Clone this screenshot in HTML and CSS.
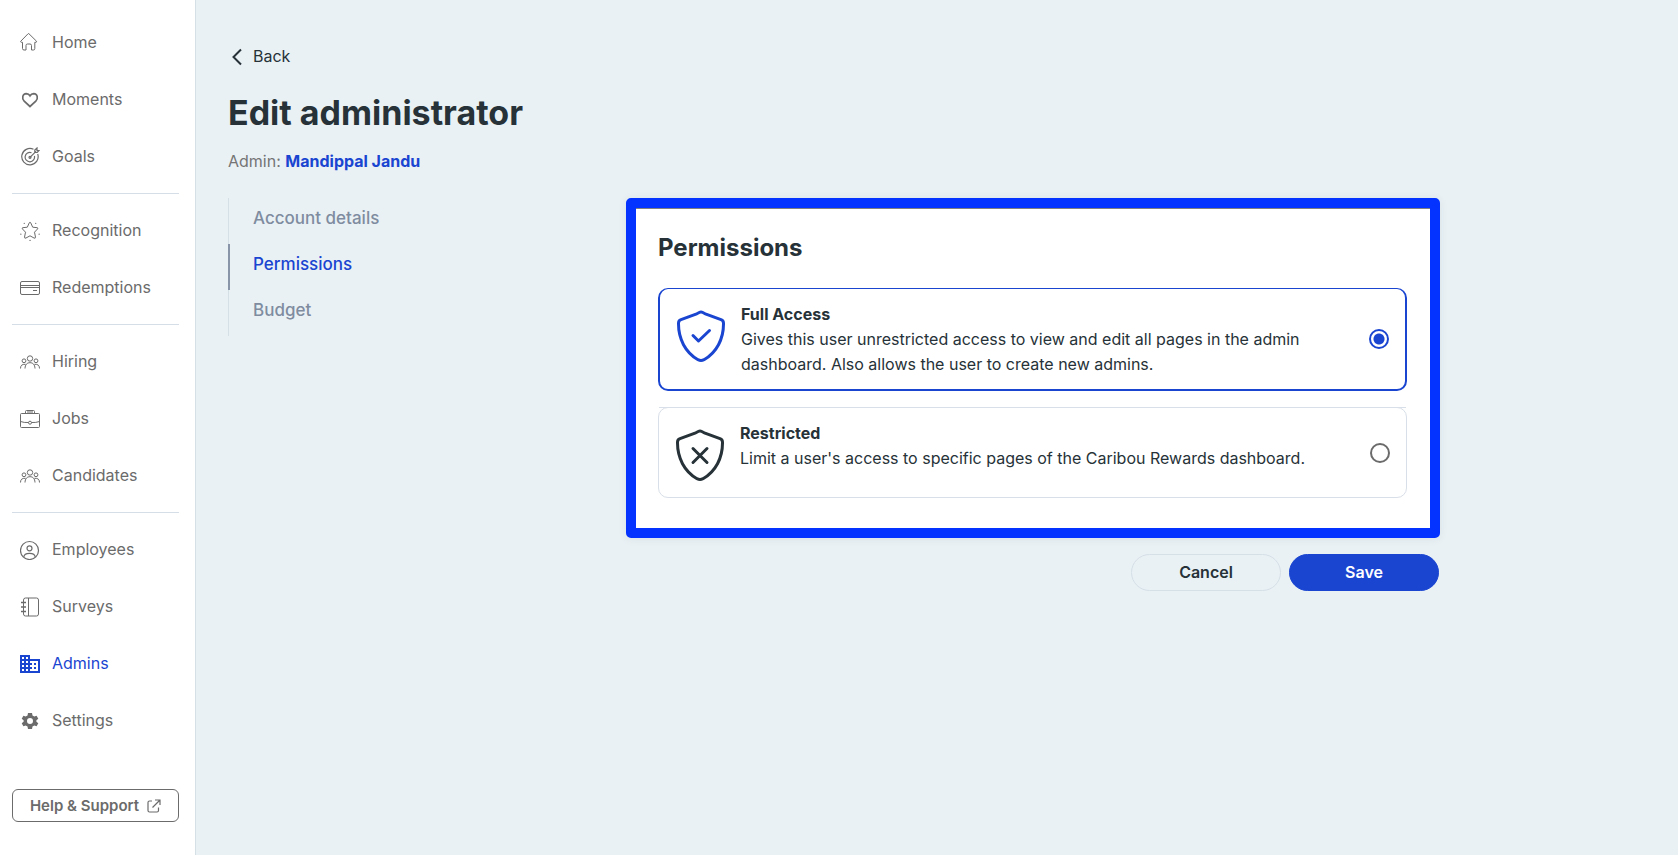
FILE: index.html
```html
<!DOCTYPE html>
<html lang="en">
<head>
<meta charset="utf-8">
<title>Edit administrator</title>
<link rel="stylesheet" href="styles.css">
</head>
<body>
<div class="app">
  <aside class="sidebar">
    <nav class="nav" aria-label="Main">
      <div class="nav-group">
        <a class="nav-link" href="#"><svg class="icon" viewBox="0 0 20 20"><path d="M8 .8Q8.500 .3 9 .8L16.500 8.200Q17 9 16 9.300H14.800V15.500Q14.800 17 13.500 17H11.500V12.500Q11.500 11 10 11H7.500Q6 11 6 12.500V17H4Q2.500 17 2.500 15.500V9.300H1.200Q.2 9 .8 8.200Z"/></svg>Home</a>
        <a class="nav-link" href="#"><svg class="icon heavy" viewBox="0 0 20 20"><path d="M10 16.500 4.200 11.200C1.500 8.300 2.500 3.800 6.300 3.600 8.200 3.600 9.300 4.600 10 5.800 10.700 4.600 11.800 3.600 13.700 3.600 17.500 3.800 18.500 8.300 15.800 11.200Z"/></svg>Moments</a>
        <a class="nav-link" href="#"><svg class="icon mid" viewBox="0 0 20 20"><path d="M13.500 2.300A8.200 8.200 0 1 0 17.700 7M11.500 5.700A4.700 4.700 0 1 0 14.400 9M10 10.300 16 4.300M14.800 5.400V3L17 1V3.500H19L17.200 5.500Z"/><circle cx="10" cy="10.300" r="1"/></svg>Goals</a>
      </div>
      <div class="nav-group">
        <a class="nav-link" href="#"><svg class="icon" viewBox="0 0 20 20"><path d="M10 1.200Q10.500 1.200 10.800 2L12.700 6.200 17.200 6.700Q18.500 7 17.500 8L14.500 11.200 15.500 16.200Q15.500 17.700 14 17L10 14.800 6 17Q4.500 17.700 4.500 16.200L5.500 11.200 2.500 8Q1.500 7 2.800 6.700L7.300 6.200 9.200 2Q9.500 1.200 10 1.200Z"/><path class="dots" d="M4.200 2.300h.1M15.700 2.300h.1M.8 13.200h.1M19.100 13.200h.1M10 19.400h.1"/></svg>Recognition</a>
        <a class="nav-link" href="#"><svg class="icon" viewBox="0 0 20 20"><rect x=".5" y="3.500" width="19" height="13" rx="1.500"/><path d="M.5 7.500h19M.5 9.500h19M13 12.500h4"/></svg>Redemptions</a>
      </div>
      <div class="nav-group">
        <a class="nav-link" href="#"><svg class="icon" viewBox="0 0 20 20"><circle cx="10" cy="6.500" r="2.700"/><circle cx="4" cy="8.800" r="1.900"/><circle cx="16" cy="8.800" r="1.900"/><path d="M5 16.500C5.200 12.500 7 10.700 10 10.700S14.800 12.500 15 16.500M.5 16.500C.5 13.500 2 12 5.500 12.300M19.500 16.500C19.500 13.500 18 12 14.500 12.300"/></svg>Hiring</a>
        <a class="nav-link" href="#"><svg class="icon" viewBox="0 0 20 20"><rect x=".5" y="4.500" width="19" height="14" rx="1"/><path d="M5.500 4V2.500Q5.500 1.500 6.500 1.500h7Q14.500 1.500 14.500 2.500V4M7 3h6M.5 12.500Q4 13.800 8.500 13.500M11.500 13.500Q16 13.800 19.500 12.500"/><circle cx="10" cy="13.700" r="1.500"/></svg>Jobs</a>
        <a class="nav-link" href="#"><svg class="icon" viewBox="0 0 20 20"><circle cx="10" cy="6.500" r="2.700"/><circle cx="4" cy="8.800" r="1.900"/><circle cx="16" cy="8.800" r="1.900"/><path d="M5 16.500C5.200 12.500 7 10.700 10 10.700S14.800 12.500 15 16.500M.5 16.500C.5 13.500 2 12 5.500 12.300M19.500 16.500C19.500 13.500 18 12 14.500 12.300"/></svg>Candidates</a>
      </div>
      <div class="nav-group">
        <a class="nav-link" href="#"><svg class="icon mid" viewBox="0 0 20 20"><circle cx="9.500" cy="10.500" r="9"/><circle cx="9.500" cy="8.300" r="2.500"/><path d="M3.800 17C4 14.500 6 13.300 9.500 13.300S15 14.500 15.200 17"/></svg>Employees</a>
        <a class="nav-link" href="#"><svg class="icon" viewBox="0 0 20 20"><rect x="3.500" y="1" width="15" height="18" rx="2"/><path d="M8.500 1v18"/><path class="rings" d="M1 5.500h5M1 10h5M1 14.500h5"/></svg>Surveys</a>
        <a class="nav-link active" href="#" aria-current="page"><svg class="icon solid" viewBox="0 0 20 20"><path fill-rule="evenodd" d="M0 1H10V5H20V19H0ZM2 3V5H4V3ZM6 3V5H8V3ZM2 7V9H4V7ZM6 7V9H8V7ZM2 11V13H4V11ZM6 11V13H8V11ZM2 15V17H4V15ZM6 15V17H8V15ZM10 7V9H12V11H10V13H12V15H10V17H18V7ZM14 9H16V11H14ZM14 13H16V15H14Z"/></svg>Admins</a>
        <a class="nav-link" href="#"><svg class="icon solid" viewBox="0 0 20 20"><path fill-rule="evenodd" d="M8 2H12L12.500 4.600 14.300 5.600 16.600 4.700 18.300 7.800 16.400 9.200V10.800L18.300 12.200 16.600 15.300 14.300 14.400 12.500 15.400 12 18H8L7.500 15.400 5.700 14.400 3.400 15.300 1.700 12.200 3.600 10.800V9.200L1.700 7.800 3.400 4.700 5.700 5.600 7.500 4.600ZM10 7A3 3 0 1 0 10 13 3 3 0 1 0 10 7Z"/></svg>Settings</a>
      </div>
    </nav>
    <button class="help" type="button">Help &amp; Support<svg class="help-icon" viewBox="0 0 14 14"><path d="M5 2H2.500Q1 2 1 3.500V11.500Q1 13 2.500 13H10Q11.500 13 11.500 11.500V8.500M8 1H13V6M13 1 5.500 8.500"/></svg></button>
  </aside>

  <main class="main">
    <div class="content">
      <a class="back" href="#"><svg class="back-icon" viewBox="0 0 12 18"><path d="M10 1.500 2.500 9 10 16.500"/></svg>Back</a>
      <h1 class="title">Edit administrator</h1>
      <p class="subtitle">Admin: <strong>Mandippal Jandu</strong></p>
      <div class="columns">
        <nav class="tabs" aria-label="Administrator sections">
          <a class="tab" href="#">Account details</a>
          <a class="tab current" href="#" aria-current="true">Permissions</a>
          <a class="tab" href="#">Budget</a>
        </nav>
        <form class="form">
          <section class="card">
            <h2 class="card-title">Permissions</h2>
            <div class="options">
              <label class="option selected" for="full">
                <svg class="shield" viewBox="0 0 50 52"><path d="M23.200 2.500Q25 1.600 26.800 2.500L30 4.200 45 9.700Q47.500 10.600 47.500 13.200C47.700 29 40.500 42.500 28 49.700Q25 51.200 22 49.700C9.500 42.500 2.300 29 2.500 13.200Q2.500 10.600 5 9.700L20 4.200Z"/><path d="M17 25.500 22.500 31 33.500 20.500"/></svg>
                <span class="option-text"><strong>Full Access</strong><span>Gives this user unrestricted access to view and edit all pages in the admin dashboard. Also allows the user to create new admins.</span></span>
                <input class="radio" type="radio" id="full" name="access" checked>
              </label>
              <label class="option" for="restricted">
                <svg class="shield" viewBox="0 0 50 52"><path d="M23.200 2.500Q25 1.600 26.800 2.500L30 4.200 45 9.700Q47.500 10.600 47.500 13.200C47.700 29 40.500 42.500 28 49.700Q25 51.200 22 49.700C9.500 42.500 2.300 29 2.500 13.200Q2.500 10.600 5 9.700L20 4.200Z"/><path d="M18 19.500 32 33.500M32 19.500 18 33.500"/></svg>
                <span class="option-text"><strong>Restricted</strong><span>Limit a user's access to specific pages of the Caribou Rewards dashboard.</span></span>
                <input class="radio" type="radio" id="restricted" name="access">
              </label>
            </div>
          </section>
          <div class="actions">
            <button class="button" type="button">Cancel</button>
            <button class="button primary" type="submit">Save</button>
          </div>
        </form>
      </div>
    </div>
  </main>
</div>
</body>
</html>
```
FILE: styles.css
```css
* { box-sizing: border-box; }
body {
  margin: 0;
  background: #e9f1f5;
  color: #263238;
  font: 16px/25px Inter, "Liberation Sans", sans-serif;
}
a { color: inherit; text-decoration: none; }
button { font-family: inherit; cursor: pointer; }

.app { display: flex; min-height: 100vh; }

.sidebar {
  display: flex;
  flex-direction: column;
  flex: 0 0 196px;
  padding: 14px 16px 33px 12px;
  border-right: 1px solid #d5dfe6;
  background: #fff;
  color: #6b6b6b;
}
.nav-group + .nav-group {
  margin-top: 8px;
  padding-top: 8px;
  border-top: 1px solid #d5dde6;
}
.nav-link {
  display: flex;
  align-items: center;
  gap: 12px;
  height: 57px;
  padding-left: 8px;
}
.nav-link.active { color: #1a45d1; }
.icon {
  width: 20px;
  height: 20px;
  fill: none;
  stroke: currentColor;
  stroke-width: 1;
}
.icon.mid { stroke-width: 1.2; }
.icon.heavy { stroke-width: 1.7; }
.icon.solid { fill: currentColor; stroke: none; }
.dots { stroke-width: 1.2; stroke-linecap: round; }
.rings { stroke-width: 1.5; }

.help {
  display: flex;
  align-items: center;
  justify-content: center;
  gap: 8px;
  height: 33px;
  margin-top: auto;
  border: 1px solid #6b6b6b;
  border-radius: 6px;
  background: #fff;
  color: #6b6b6b;
  font-size: 15px;
  font-weight: 600;
}
.help-icon {
  width: 14px;
  height: 14px;
  fill: none;
  stroke: currentColor;
  stroke-width: 1.2;
}

.main { flex: 1; min-width: 0; padding: 44px 32px; }
.content { max-width: 1212px; }
.back { display: inline-flex; align-items: center; gap: 10px; padding-left: 3px; }
.back-icon {
  width: 12px;
  height: 18px;
  fill: none;
  stroke: currentColor;
  stroke-width: 2;
}
.title { margin: 20px 0 0; font-size: 34px; line-height: 40px; font-weight: 700; }
.subtitle { margin: 16px 0 0; color: #757575; }
.subtitle strong { color: #1a45d1; }

.columns {
  display: grid;
  grid-template-columns: minmax(160px, 398px) minmax(0, 814px);
  align-items: start;
  margin-top: 24px;
}
.tab {
  display: block;
  height: 46px;
  padding-left: 24px;
  border-left: 1px solid #d5dfe6;
  color: #7f8c9f;
  font-size: 17px;
  font-weight: 500;
  line-height: 40px;
}
.tab.current { padding-left: 23px; border-left: 2px solid #8895a9; color: #1a45d1; }

.card {
  padding: 24px 23px 30px 22px;
  border: 10px solid #0433ff;
  border-radius: 5px;
  background: #fff;
  box-shadow: 0 1px 8px rgba(38, 50, 56, 0.08), inset 0 1px #808080;
}
.card-title { margin: 0; font-size: 24px; line-height: 32px; font-weight: 700; }
.options { display: grid; gap: 16px; margin-top: 24px; }
.option {
  position: relative;
  display: flex;
  align-items: flex-start;
  gap: 15px;
  min-height: 91px;
  padding: 13px 16px 12px;
  border: 1px solid #d8dfe8;
  border-radius: 10px;
  cursor: pointer;
}
.option:not(.selected)::before {
  content: "";
  position: absolute;
  inset: -1px 0 auto;
  border-top: 1px solid #d8dfe8;
}
.option.selected { border: 2px solid #1a45d1; border-top-width: 1px; }
.shield {
  flex: none;
  width: 50px;
  height: 52px;
  margin-top: 8px;
  fill: none;
  stroke: currentColor;
  stroke-width: 3;
  stroke-linecap: round;
  stroke-linejoin: round;
}
.selected .shield { color: #1a45d1; }
.option-text { display: flex; flex: 1; flex-direction: column; }
.option-text strong { font-weight: 700; }
.radio {
  flex: none;
  align-self: center;
  appearance: none;
  width: 20px;
  height: 20px;
  margin: 0;
  border: 2px solid #6b6b6b;
  border-radius: 50%;
}
.radio:checked {
  border-color: #1a45d1;
  background: radial-gradient(circle, #1a45d1 5px, #fff 6px);
}

.actions { display: flex; justify-content: flex-end; gap: 8px; margin-top: 16px; padding-right: 1px; }
.button {
  width: 150px;
  height: 37px;
  border: 1px solid #d5dfe6;
  border-radius: 19px;
  background: transparent;
  color: #263238;
  font-size: 16px;
  font-weight: 600;
}
.button.primary { border-color: #1a45d1; background: #1a45d1; color: #fff; }
```
